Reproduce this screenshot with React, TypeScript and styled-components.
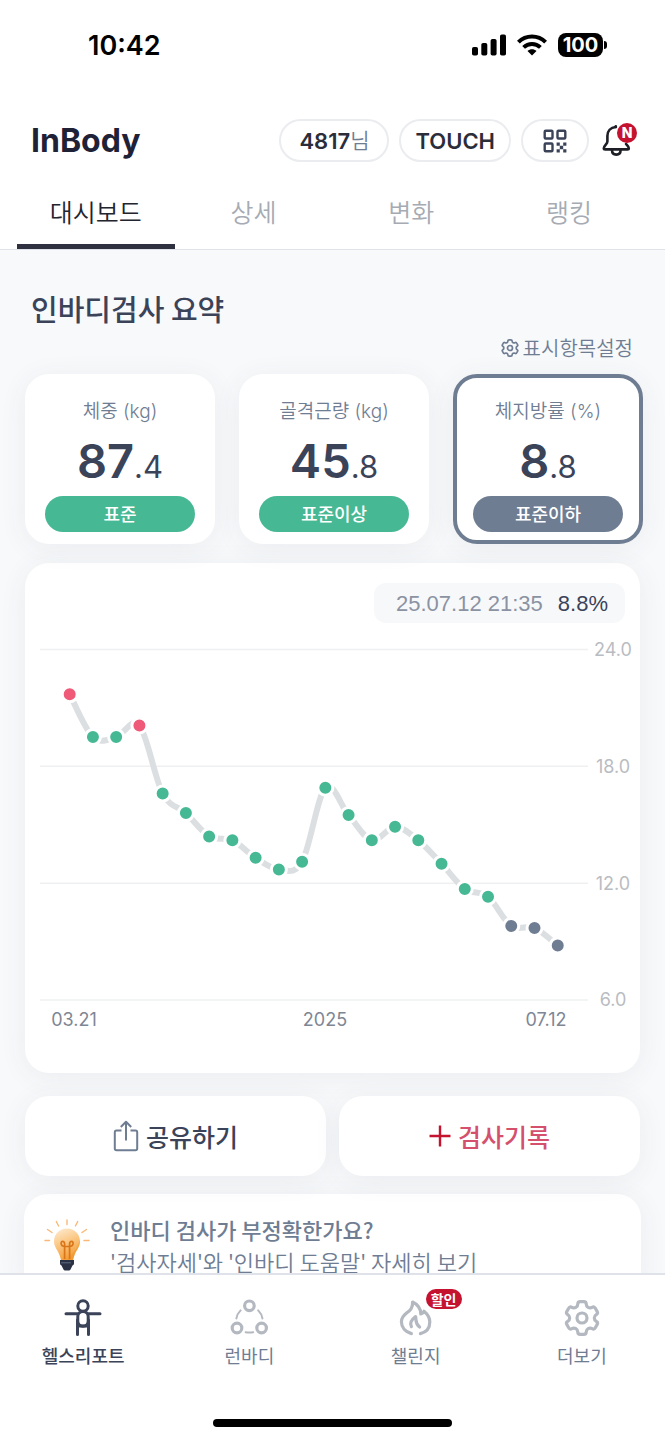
import React from "react";
import styled, { createGlobalStyle, css } from "styled-components";

const ink = "#3b4359";
const slate = "#6f7d93";
const muted = "#b4b8c0";
const green = "#47b894";
const rose = "#ee5a78";
const crimson = "#c4122f";
const textFont = `Inter, "Noto Sans CJK KR", sans-serif`;
const koreanFont = `"Noto Sans CJK KR", sans-serif`;

const GlobalStyle = createGlobalStyle`
  *, *::before, *::after { box-sizing: border-box; }
  body { margin: 0; background: #fff; font-family: ${textFont}; color: ${ink}; }
  button { font: inherit; color: inherit; background: none; border: 0; padding: 0; margin: 0; cursor: pointer; }
  a { color: inherit; text-decoration: none; }
  h1, h2, p { margin: 0; }
`;

const Screen = styled.div`
  display: flex;
  flex-direction: column;
  height: 100vh;
  overflow: hidden;
`;

/* ---------- status bar ---------- */

const StatusBar = styled.div`
  display: flex;
  align-items: center;
  justify-content: space-between;
  height: 90px;
  flex: none;
  padding: 0 62px 0 88px;
  color: #000;
`;

const Clock = styled.span`
  padding-top: 2px;
  font-size: 27px;
  line-height: 32px;
  font-weight: 600;
`;

const StatusIcons = styled.div`
  display: flex;
  align-items: center;
  gap: 11px;
`;

const Battery = styled.span`
  position: relative;
  width: 45px;
  height: 24px;
  border-radius: 8px;
  background: #000;
  color: #fff;
  font-size: 20px;
  line-height: 24px;
  font-weight: 700;
  text-align: center;
  &::after {
    content: "";
    position: absolute;
    left: 46px;
    top: 8px;
    width: 3px;
    height: 8px;
    border-radius: 0 4px 4px 0;
    background: #000;
  }
`;

/* ---------- header ---------- */

const Header = styled.header`
  display: flex;
  align-items: center;
  justify-content: space-between;
  flex: none;
  padding: 29px 27px 0 31px;
`;

const Logo = styled.h1`
  font-size: 32px;
  line-height: 38px;
  font-weight: 700;
  color: #1f2237;
`;

const HeaderActions = styled.div`
  display: flex;
  align-items: center;
  gap: 10px;
`;

const Pill = styled.button`
  display: flex;
  align-items: center;
  justify-content: center;
  height: 43px;
  min-width: 110px;
  padding: 0 14px;
  border: 2px solid #ebecef;
  border-radius: 22px;
  font-size: 22px;
  line-height: 28px;
  font-weight: 600;
  color: #2b2d3a;
`;

const IconPill = styled(Pill)`
  min-width: 68px;
`;

const Honorific = styled.span`
  font-size: 21px;
  font-weight: 350;
  color: ${slate};
`;

const BellButton = styled.button`
  position: relative;
  width: 36px;
  height: 36px;
  margin-left: 3px;
`;

const NewBadge = styled.span`
  position: absolute;
  top: 0;
  right: 1px;
  width: 20px;
  height: 20px;
  border-radius: 50%;
  background: ${crimson};
  color: #fff;
  font-size: 14px;
  line-height: 20px;
  font-weight: 800;
  text-align: center;
`;

/* ---------- tabs ---------- */

const Tabs = styled.nav`
  display: flex;
  flex: none;
  margin-top: 12px;
  padding: 0 17px;
  border-bottom: 1px solid #dfe2e8;
`;

const Tab = styled.button<{ $active?: boolean }>`
  flex: 1;
  height: 75px;
  padding-top: 3px;
  border-bottom: 5px solid ${(p) => (p.$active ? "#2f3140" : "transparent")};
  font-family: ${koreanFont};
  font-size: 25px;
  line-height: 36px;
  font-weight: 350;
  color: ${(p) => (p.$active ? "#22242e" : "#a6abb3")};
`;

/* ---------- content ---------- */

const Content = styled.main`
  flex: 1;
  min-height: 0;
  overflow: hidden auto;
  scrollbar-width: none;
  background: #f8f9fb;
`;

const SectionTitle = styled.h2`
  padding: 37px 31px 0;
  font-family: ${koreanFont};
  font-size: 29px;
  line-height: 42px;
  font-weight: 500;
`;

const SettingsRow = styled.div`
  display: flex;
  justify-content: flex-end;
  padding: 5px 32px 0;
`;

const SettingsButton = styled.button`
  display: flex;
  align-items: center;
  gap: 3px;
  font-family: ${koreanFont};
  font-size: 20px;
  line-height: 28px;
  font-weight: 350;
  color: ${slate};
`;

const surface = css`
  background: #fff;
  border-radius: 24px;
  box-shadow: 0 4px 28px rgba(60, 66, 80, 0.07);
`;

const Metrics = styled.div`
  display: grid;
  grid-template-columns: repeat(3, 1fr);
  gap: 24px;
  padding: 12px 22px 0 25px;
`;

const MetricCard = styled.button<{ $selected?: boolean }>`
  ${surface}
  display: flex;
  flex-direction: column;
  align-items: center;
  height: 170px;
  padding: 20px 16px 8px;
  border: 4px solid ${(p) => (p.$selected ? slate : "#fff")};
`;

const MetricLabel = styled.span`
  font-size: 19px;
  line-height: 28px;
  font-weight: 350;
  color: ${slate};
`;

const MetricValue = styled.span`
  margin-top: 7px;
  font-size: 47px;
  line-height: 56px;
  font-weight: 600;
`;

const Fraction = styled.span`
  font-size: 31px;
  font-weight: 400;
`;

const Verdict = styled.span<{ $color: string }>`
  width: 100%;
  margin-top: auto;
  padding-bottom: 2px;
  border-radius: 18px;
  background: ${(p) => p.$color};
  color: #fff;
  font-family: ${koreanFont};
  font-size: 18px;
  line-height: 34px;
  font-weight: 500;
`;

const ChartCard = styled.section`
  ${surface}
  margin: 19px 25px 0;
  padding: 20px 0 36px;
`;

const Reading = styled.div`
  display: flex;
  gap: 15px;
  width: max-content;
  margin: 0 15px 10px auto;
  padding: 1px 17px 0 22px;
  border-radius: 12px;
  background: #f7f8fa;
  font-family: "Liberation Sans", sans-serif;
  font-size: 22px;
  line-height: 39px;
  color: ${ink};
`;

const ReadingTime = styled.time`
  color: #8b93a3;
`;

const ChartSvg = styled.svg`
  display: block;
  width: 100%;
  height: auto;
`;

const AxisText = styled.text`
  font-family: Inter, sans-serif;
  font-size: 18px;
  font-weight: 400;
  text-anchor: middle;
`;

const Actions = styled.div`
  display: grid;
  grid-template-columns: 1fr 1fr;
  gap: 13px;
  padding: 23px 25px 0;
`;

const ActionButton = styled.button<{ $color: string }>`
  ${surface}
  display: flex;
  align-items: center;
  justify-content: center;
  gap: 7px;
  height: 80px;
  font-family: ${koreanFont};
  font-size: 25px;
  line-height: 36px;
  font-weight: 500;
  color: ${(p) => p.$color};
`;

const TipCard = styled.a`
  ${surface}
  display: flex;
  gap: 20px;
  margin: 18px 24px 0;
  padding: 19px 20px;
  font-family: ${koreanFont};
  font-size: 22px;
  line-height: 32px;
  font-weight: 350;
  color: ${slate};
`;

const TipFigure = styled.div`
  padding-top: 6px;
`;

const TipTitle = styled.p`
  font-weight: 500;
`;

/* ---------- bottom navigation ---------- */

const BottomNav = styled.nav`
  display: flex;
  flex: none;
  padding-top: 23px;
  border-top: 2px solid #dfe2e8;
  background: #fff;
`;

const NavItem = styled.a<{ $active?: boolean }>`
  position: relative;
  flex: 1;
  display: flex;
  flex-direction: column;
  align-items: center;
  gap: 4px;
  font-family: ${koreanFont};
  font-size: 18px;
  line-height: 26px;
  font-weight: ${(p) => (p.$active ? 500 : 400)};
  color: ${(p) => (p.$active ? ink : slate)};
`;

const SaleBadge = styled.span`
  position: absolute;
  top: -9px;
  left: calc(50% + 10px);
  width: 36px;
  border-radius: 10px;
  background: ${crimson};
  color: #fff;
  font-size: 14px;
  line-height: 20px;
  font-weight: 700;
  text-align: center;
`;

const HomeIndicator = styled.div`
  flex: none;
  width: 36%;
  height: 8px;
  margin: 51px auto 13px;
  border-radius: 4px;
  background: #000;
`;

/* ---------- icons ---------- */

/** Closed outline through the given corners, each corner rounded by radius r. */
function roundedOutline(points: number[][], r: number) {
  const toward = (a: number[], b: number[]) => {
    const d = Math.hypot(b[0] - a[0], b[1] - a[1]);
    const t = Math.min(r, d / 2) / d;
    return `${(a[0] + (b[0] - a[0]) * t).toFixed(2)} ${(a[1] + (b[1] - a[1]) * t).toFixed(2)}`;
  };
  return (
    points
      .map((p, i) => {
        const prev = points[(i + points.length - 1) % points.length];
        const next = points[(i + 1) % points.length];
        return `${i ? "L" : "M"}${toward(p, prev)}Q${p[0].toFixed(2)} ${p[1].toFixed(2)} ${toward(p, next)}`;
      })
      .join("") + "Z"
  );
}

const gearPath = roundedOutline(
  Array.from({ length: 6 }).flatMap((_, k) => {
    const a = (k * Math.PI) / 3;
    return [
      [-4.2, -11.8],
      [-4.2, -16.4],
      [4.2, -16.4],
      [4.2, -11.8],
    ].map(([x, y]) => [20 + x * Math.cos(a) - y * Math.sin(a), 20 + x * Math.sin(a) + y * Math.cos(a)]);
  }),
  2.4,
);

const GearIcon = ({ size, color, stroke }: { size: number; color: string; stroke: number }) => (
  <svg width={size} height={size} viewBox="0 0 40 40" fill="none" stroke={color} strokeWidth={stroke} strokeLinejoin="round" aria-hidden>
    <path d={gearPath} />
    <circle cx="20" cy="20" r="5" />
  </svg>
);

const SignalIcon = () => (
  <svg width="34" height="22" viewBox="0 0 34 22" aria-hidden>
    <rect x="0" y="13" width="6" height="8.5" rx="1.8" />
    <rect x="9.3" y="9" width="6" height="12.5" rx="1.8" />
    <rect x="18.6" y="5" width="6" height="16.5" rx="1.8" />
    <rect x="28" y="0.5" width="6" height="21" rx="1.8" />
  </svg>
);

const WifiIcon = () => (
  <svg width="30" height="22" viewBox="0 0 30 22" fill="none" stroke="#000" strokeWidth="4" aria-hidden>
    <path d="M1.4 8.2C9 0.7 21 0.7 28.6 8.2" />
    <path d="M6.6 13.4C11.4 8.9 18.6 8.9 23.4 13.4" />
    <path d="M15 21.5L10.5 17C13 14.7 17 14.7 19.5 17Z" fill="#000" stroke="none" />
  </svg>
);

const QrIcon = () => (
  <svg width="24" height="24" viewBox="0 0 24 24" fill="none" stroke={ink} strokeWidth="2.4" aria-hidden>
    <rect x="1.7" y="1.7" width="7.8" height="7.8" rx="1" />
    <rect x="14.5" y="1.7" width="7.8" height="7.8" rx="1" />
    <rect x="1.7" y="14.5" width="7.8" height="7.8" rx="1" />
    <path fill={ink} stroke="none" d="M13.6 13.6h3.2v3.2h-3.2zM20.2 13.6h3.2v3.2h-3.2zM16.8 16.8h3.4v3.4h-3.4zM13.6 20.2h3.2v3.2h-3.2zM20.2 20.2h3.2v3.2h-3.2z" />
  </svg>
);

const BellIcon = () => (
  <svg width="36" height="36" viewBox="0 0 36 36" fill="none" stroke="#1d1e26" strokeWidth="2.6" strokeLinecap="round" aria-hidden>
    <path d="M13.8 4C8.4 4.4 5.4 8.2 5.4 13V18.4C5.4 21 1.8 22.6 1.8 25.2C1.8 26 2.4 26.4 3.2 26.4H25.4C26.4 26.4 26.8 26 26.8 25.2C26.8 23.6 25.2 22.4 24 21" />
    <path d="M13.8 3.2V4" />
    <path d="M10 27C10 30 11.8 31.6 14.3 31.6S18.6 30 18.6 27" />
  </svg>
);

const ShareIcon = () => (
  <svg width="26" height="32" viewBox="0 0 26 32" fill="none" stroke={slate} strokeWidth="2" strokeLinejoin="round" aria-hidden>
    <path d="M8.5 10.5H3.5Q1.8 10.5 1.8 12.2V28.6Q1.8 30.3 3.5 30.3H22.5Q24.2 30.3 24.2 28.6V12.2Q24.2 10.5 22.5 10.5H17.5" />
    <path d="M13 20.5V2M7.8 7L13 1.8L18.2 7" />
  </svg>
);

const PlusIcon = () => (
  <svg width="22" height="22" viewBox="0 0 22 22" stroke={crimson} strokeWidth="2.4" aria-hidden>
    <path d="M11 0.5V21.5M0.5 11H21.5" />
  </svg>
);

const BulbIcon = () => (
  <svg width="46" height="52" viewBox="0 0 46 52" fill="none" aria-hidden>
    <defs>
      <linearGradient id="glass" x1="0" y1="0" x2="0.35" y2="1">
        <stop offset="0" stopColor="#fdeed8" />
        <stop offset="0.5" stopColor="#fbc987" />
        <stop offset="1" stopColor="#f5a03a" />
      </linearGradient>
    </defs>
    <path stroke="#f8b877" strokeWidth="1.4" strokeLinecap="round" d="M23 1V5.5M12.3 2.5L14.6 7M33.7 2.5L31.4 7M3.5 10.5L8 13.5M42.5 10.5L38 13.5M1 21.5H5.5M45 21.5H40" />
    <path fill="url(#glass)" d="M23 9.5C15.5 9.5 10 15 10 22.5C10 28.5 14.5 31.5 16 37.5L17 41H29L30 37.5C31.5 31.5 36 28.5 36 22.5C36 15 30.5 9.5 23 9.5Z" />
    <path fill="#ef982f" opacity="0.55" d="M36 21C36 29 31.5 31.5 30 37.5L29 41H23C27 36 33 32 36 21Z" />
    <path stroke="#d9761a" strokeWidth="1.7" d="M20.6 40V27.5M25.6 40V27.5M20.6 27.5H25.6M20.6 27.5C16.5 27.5 16.2 22.3 18.7 22.3C20.6 22.3 20.8 24.5 20.6 27.5M25.6 27.5C29.7 27.5 30 22.3 27.5 22.3C25.6 22.3 25.4 24.5 25.6 27.5" />
    <path fill="#2b3244" d="M16 41H30V44.5Q30 46 28.5 46.5L26.5 50.5Q26 51.5 25 51.5H21Q20 51.5 19.5 50.5L17.5 46.5Q16 46 16 44.5Z" />
    <path stroke="#6f7b90" strokeWidth="0.8" d="M17 43.8H27" />
  </svg>
);

const BodyIcon = () => (
  <svg width="40" height="40" viewBox="0 0 40 40" fill="none" stroke={ink} strokeWidth="3" strokeLinecap="round" aria-hidden>
    <circle cx="20" cy="8" r="5.2" />
    <rect x="14.8" y="13.4" width="10.4" height="14.8" rx="5.2" />
    <path d="M3 15.8H14.5M25.5 15.8H37M14.5 22V36.6M25.5 22V36.6M15.5 28H24.5" />
  </svg>
);

const CommunityIcon = () => (
  <svg width="40" height="40" viewBox="0 0 40 40" fill="none" stroke={muted} strokeLinecap="round" aria-hidden>
    <g strokeWidth="3.2">
      <circle cx="20.4" cy="7.8" r="4.8" />
      <circle cx="8" cy="30" r="4.8" />
      <circle cx="32.6" cy="30" r="4.8" />
    </g>
    <g strokeWidth="2">
      <path d="M11.6 12.4Q8 16 7.4 20.4M29.2 12.4Q32.8 16 33.4 20.4M16.6 34.2Q20.4 35 24.2 34.2" />
    </g>
  </svg>
);

const FlameIcon = () => (
  <svg width="40" height="40" viewBox="-2 -2 40 40" fill="none" stroke={muted} strokeWidth="3.2" strokeLinecap="round" strokeLinejoin="round" aria-hidden>
    <path d="M13.4 33.6C7.4 32 3.4 27.4 3.4 21.8C3.4 12 15.4 13.4 14.6 2C19.2 4 23 8.8 22.8 14C24.4 13.6 25.6 12.6 26 11.2C29.4 14 31.8 17.8 31.8 22C31.8 28 28 32.2 22.4 33.6" />
    <path d="M13.4 26.6C10.8 22.2 14.2 19.2 17.6 16.6C18.4 20 16.8 23.4 21.6 27" />
  </svg>
);

/* ---------- chart ---------- */

const readings = [
  21.7, 19.5, 19.5, 20.1, 16.6, 15.6, 14.4, 14.2, 13.3, 12.7, 13.1, 16.9, 15.5, 14.2, 14.9, 14.2, 13.0, 11.7, 11.3,
  9.8, 9.7, 8.8,
];
const gridValues = [24, 18, 12, 6];
const dateLabels = [
  { x: 49, text: "03.21" },
  { x: 300, text: "2025" },
  { x: 521, text: "07.12" },
];

const xAt = (i: number) => 44.7 + i * 23.24;
const yAt = (value: number) => 16.5 + (24 - value) * 19.47;
const dotColor = (value: number) => (value > 20 ? rose : value < 10 ? slate : green);

function smoothLine(values: number[]) {
  const pts = values.map((v, i) => [xAt(i), yAt(v)]);
  return pts.slice(1).reduce((d, p, i) => {
    const a = pts[i];
    const before = pts[i - 1] ?? a;
    const after = pts[i + 2] ?? p;
    const c1 = [a[0] + (p[0] - before[0]) / 6, a[1] + (p[1] - before[1]) / 6];
    const c2 = [p[0] - (after[0] - a[0]) / 6, p[1] - (after[1] - a[1]) / 6];
    return `${d}C${c1.join(" ")} ${c2.join(" ")} ${p.join(" ")}`;
  }, `M${pts[0].join(" ")}`);
}

const Chart = () => (
  <ChartSvg viewBox="0 0 615 404" role="img" aria-label="체지방률 변화">
    {gridValues.map((v) => (
      <g key={v}>
        <path d={`M15 ${yAt(v)}H563`} stroke="#eff0f1" strokeWidth="1.5" />
        <AxisText x="588" y={yAt(v) + 6.5} fill="#b9bcc2">
          {v.toFixed(1)}
        </AxisText>
      </g>
    ))}
    <path d={smoothLine(readings)} fill="none" stroke="#dcdfe1" strokeWidth="6" />
    {readings.map((v, i) => (
      <circle key={i} cx={xAt(i)} cy={yAt(v)} r="7.5" fill={dotColor(v)} stroke="#fff" strokeWidth="3" />
    ))}
    {dateLabels.map((l) => (
      <AxisText key={l.text} x={l.x} y="393" fill="#7e8694">
        {l.text}
      </AxisText>
    ))}
  </ChartSvg>
);

/* ---------- page ---------- */

const metrics = [
  { label: "체중 (kg)", whole: "87", fraction: ".4", verdict: "표준", color: green },
  { label: "골격근량 (kg)", whole: "45", fraction: ".8", verdict: "표준이상", color: green },
  { label: "체지방률 (%)", whole: "8", fraction: ".8", verdict: "표준이하", color: slate, selected: true },
];

export default function App() {
  return (
    <Screen>
      <GlobalStyle />
      <StatusBar>
        <Clock>10:42</Clock>
        <StatusIcons>
          <SignalIcon />
          <WifiIcon />
          <Battery>100</Battery>
        </StatusIcons>
      </StatusBar>

      <Header>
        <Logo>InBody</Logo>
        <HeaderActions>
          <Pill>
            4817<Honorific>님</Honorific>
          </Pill>
          <Pill>TOUCH</Pill>
          <IconPill aria-label="QR">
            <QrIcon />
          </IconPill>
          <BellButton aria-label="알림">
            <BellIcon />
            <NewBadge>N</NewBadge>
          </BellButton>
        </HeaderActions>
      </Header>

      <Tabs>
        <Tab $active>대시보드</Tab>
        <Tab>상세</Tab>
        <Tab>변화</Tab>
        <Tab>랭킹</Tab>
      </Tabs>

      <Content>
        <SectionTitle>인바디검사 요약</SectionTitle>
        <SettingsRow>
          <SettingsButton>
            <GearIcon size={20} color={slate} stroke={3.4} />
            표시항목설정
          </SettingsButton>
        </SettingsRow>

        <Metrics>
          {metrics.map((m) => (
            <MetricCard key={m.label} $selected={m.selected}>
              <MetricLabel>{m.label}</MetricLabel>
              <MetricValue>
                {m.whole}
                <Fraction>{m.fraction}</Fraction>
              </MetricValue>
              <Verdict $color={m.color}>{m.verdict}</Verdict>
            </MetricCard>
          ))}
        </Metrics>

        <ChartCard>
          <Reading>
            <ReadingTime>25.07.12 21:35</ReadingTime>
            <span>8.8%</span>
          </Reading>
          <Chart />
        </ChartCard>

        <Actions>
          <ActionButton $color={ink}>
            <ShareIcon />
            공유하기
          </ActionButton>
          <ActionButton $color="#d4506c">
            <PlusIcon />
            검사기록
          </ActionButton>
        </Actions>

        <TipCard href="#guide">
          <TipFigure>
            <BulbIcon />
          </TipFigure>
          <div>
            <TipTitle>인바디 검사가 부정확한가요?</TipTitle>
            <p>'검사자세'와 '인바디 도움말' 자세히 보기</p>
          </div>
        </TipCard>
      </Content>

      <BottomNav>
        <NavItem href="#report" $active>
          <BodyIcon />
          헬스리포트
        </NavItem>
        <NavItem href="#runbody">
          <CommunityIcon />
          런바디
        </NavItem>
        <NavItem href="#challenge">
          <FlameIcon />
          챌린지
          <SaleBadge>할인</SaleBadge>
        </NavItem>
        <NavItem href="#more">
          <GearIcon size={40} color={muted} stroke={3.2} />
          더보기
        </NavItem>
      </BottomNav>
      <HomeIndicator />
    </Screen>
  );
}
